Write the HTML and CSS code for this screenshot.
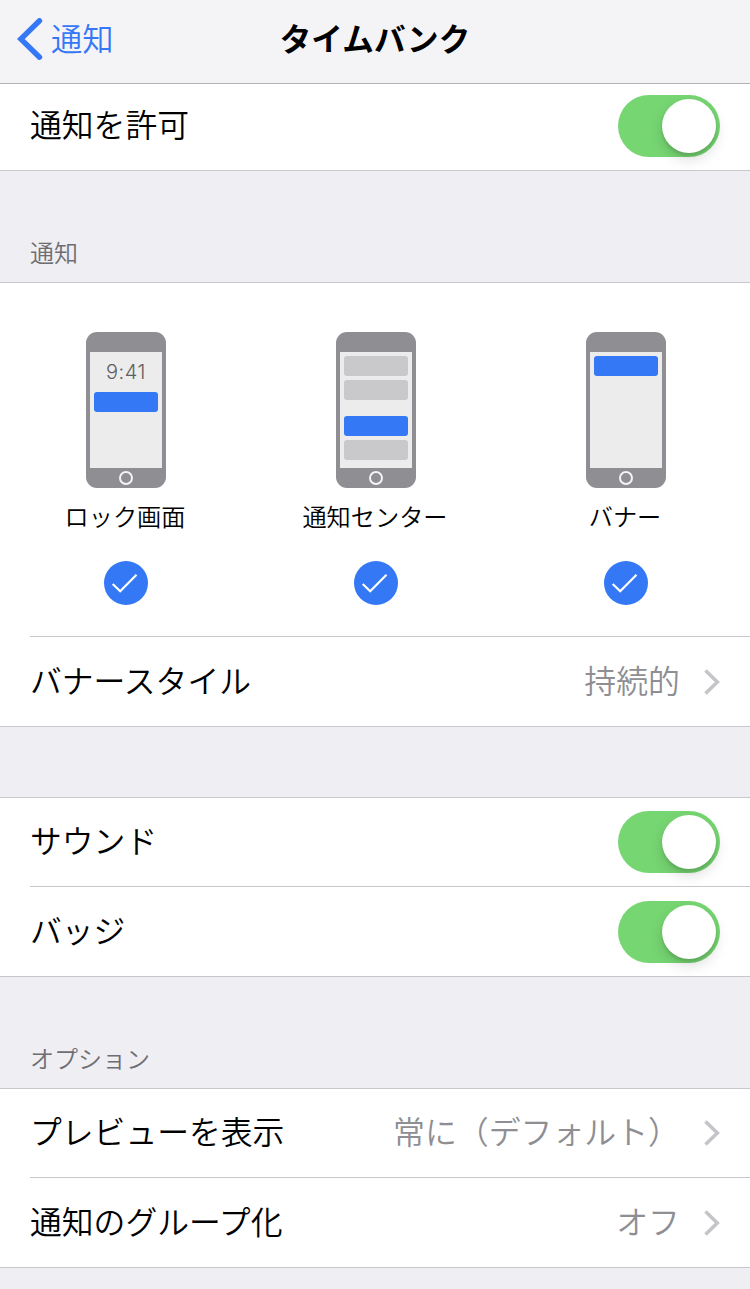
FILE: index.html
```html
<!DOCTYPE html>
<html lang="ja">
<head>
    <meta charset="UTF-8">
    <meta name="viewport" content="width=device-width, initial-scale=1.0">
    <title>タイムバンク</title>
    <link rel="stylesheet" href="styles.css">
</head>
<body>
    <header>
        <a class="back" href="#">
            <svg width="26" height="42" viewBox="0 0 26 42"><path d="M22.5 2.8L3.8 21L22.5 39.2" fill="none" stroke="#3478f6" stroke-width="5.4" stroke-linecap="round"/></svg>
            <span>通知</span>
        </a>
        <h1>タイムバンク</h1>
    </header>
    <main>
        <section class="group first">
            <div class="row">
                <span class="label">通知を許可</span>
                <span class="toggle"></span>
            </div>
        </section>

        <h2>通知</h2>
        <section class="group">
            <div class="previews">
                <div class="preview">
                    <div class="phone">
                        <div class="screen">
                            <div class="time">9:41</div>
                            <div class="bar blue"></div>
                        </div>
                        <div class="home"></div>
                    </div>
                    <span class="name">ロック画面</span>
                    <svg class="check" width="44" height="44" viewBox="0 0 44 44"><circle cx="22" cy="22" r="22" fill="#3478f6"/><path d="M8.7 23L16.2 30.3L32.5 13.8" fill="none" stroke="#fff" stroke-width="2.2"/></svg>
                </div>
                <div class="preview">
                    <div class="phone">
                        <div class="screen">
                            <div class="bar"></div>
                            <div class="bar"></div>
                            <div class="bar blue spaced"></div>
                            <div class="bar"></div>
                        </div>
                        <div class="home"></div>
                    </div>
                    <span class="name">通知センター</span>
                    <svg class="check" width="44" height="44" viewBox="0 0 44 44"><circle cx="22" cy="22" r="22" fill="#3478f6"/><path d="M8.7 23L16.2 30.3L32.5 13.8" fill="none" stroke="#fff" stroke-width="2.2"/></svg>
                </div>
                <div class="preview">
                    <div class="phone">
                        <div class="screen">
                            <div class="bar blue"></div>
                        </div>
                        <div class="home"></div>
                    </div>
                    <span class="name">バナー</span>
                    <svg class="check" width="44" height="44" viewBox="0 0 44 44"><circle cx="22" cy="22" r="22" fill="#3478f6"/><path d="M8.7 23L16.2 30.3L32.5 13.8" fill="none" stroke="#fff" stroke-width="2.2"/></svg>
                </div>
            </div>
            <div class="row line">
                <span class="label">バナースタイル</span>
                <span class="value">持続的</span>
                <svg class="arrow" width="16" height="26" viewBox="0 0 16 26"><path d="M1.5 1.5L13.3 13L1.5 24.5" fill="none" stroke="#c5c5c9" stroke-width="3.6"/></svg>
            </div>
        </section>

        <div class="gap"></div>
        <section class="group">
            <div class="row">
                <span class="label">サウンド</span>
                <span class="toggle"></span>
            </div>
            <div class="row line">
                <span class="label">バッジ</span>
                <span class="toggle"></span>
            </div>
        </section>

        <h2>オプション</h2>
        <section class="group">
            <div class="row">
                <span class="label">プレビューを表示</span>
                <span class="value">常に（デフォルト）</span>
                <svg class="arrow" width="16" height="26" viewBox="0 0 16 26"><path d="M1.5 1.5L13.3 13L1.5 24.5" fill="none" stroke="#c5c5c9" stroke-width="3.6"/></svg>
            </div>
            <div class="row line">
                <span class="label">通知のグループ化</span>
                <span class="value">オフ</span>
                <svg class="arrow" width="16" height="26" viewBox="0 0 16 26"><path d="M1.5 1.5L13.3 13L1.5 24.5" fill="none" stroke="#c5c5c9" stroke-width="3.6"/></svg>
            </div>
        </section>
    </main>
</body>
</html>
```
FILE: styles.css
```css
body, html {
    margin: 0;
    padding: 0;
}
body {
    min-height: 1289px;
    background-color: #efeef3;
    color: #000000;
    font-family: "Noto Sans CJK JP", sans-serif;
    font-weight: 350;
    overflow: hidden;
}
header {
    box-sizing: border-box;
    height: 84px;
    padding: 0 17px 6px;
    display: grid;
    grid-template-columns: 1fr auto 1fr;
    align-items: center;
    background-color: #f4f4f7;
    border-bottom: 1px solid #b2b2b5;
}
svg {
    display: block;
}
.back {
    display: flex;
    align-items: center;
    gap: 8px;
    font-size: 31.3px;
    line-height: 40px;
    color: #3478f6;
    text-decoration: none;
}
.back span {
    padding-bottom: 2px;
}
h1 {
    margin: 0;
    padding-bottom: 4px;
    font-size: 31.6px;
    line-height: 40px;
    font-weight: 700;
}
h2 {
    box-sizing: border-box;
    height: 111px;
    margin: 0;
    padding: 63px 30px 0;
    font-size: 24px;
    line-height: 36px;
    font-weight: 350;
    color: #6d6d72;
}
.gap {
    height: 70px;
}
.group {
    background-color: #ffffff;
    border-top: 1px solid #c8c7cc;
    border-bottom: 1px solid #c8c7cc;
}
.group.first {
    border-top: none;
}
.row {
    box-sizing: border-box;
    height: 88px;
    padding-right: 30px;
    margin-left: 30px;
    display: flex;
    align-items: center;
}
.row.line {
    height: 90px;
    border-top: 1px solid #c8c7cc;
}
.first .row {
    height: 86px;
    padding-bottom: 2px;
}
.label {
    flex: 1;
    font-size: 31.8px;
    line-height: 44px;
    padding-bottom: 6px;
}
.value {
    font-size: 31.9px;
    line-height: 44px;
    padding-bottom: 6px;
    color: #8e8e93;
}
.arrow {
    margin-left: 24px;
}
.toggle {
    box-sizing: border-box;
    width: 102px;
    height: 62px;
    padding: 4px;
    border-radius: 31px;
    background-color: #76d672;
    display: flex;
    justify-content: flex-end;
}
.toggle::after {
    content: "";
    width: 54px;
    height: 54px;
    border-radius: 50%;
    background-color: #ffffff;
    box-shadow: 0 6px 14px rgba(0, 0, 0, 0.15), 0 3px 3px rgba(0, 0, 0, 0.1);
}
.previews {
    box-sizing: border-box;
    height: 353px;
    padding-top: 49px;
    display: grid;
    grid-template-columns: repeat(3, 1fr);
}
.preview {
    display: flex;
    flex-direction: column;
    align-items: center;
}
.phone {
    box-sizing: border-box;
    width: 80px;
    height: 156px;
    padding: 20px 4px 0;
    margin-left: 2px;
    border-radius: 11px;
    background-color: #8e8e93;
}
.screen {
    box-sizing: border-box;
    height: 116px;
    padding: 4px;
    display: flex;
    flex-direction: column;
    gap: 4px;
    background-color: #ececec;
}
.time {
    height: 32px;
    font-family: Inter, sans-serif;
    font-size: 20px;
    line-height: 33px;
    font-weight: 300;
    letter-spacing: 0.6px;
    text-align: center;
    color: #5e5e63;
}
.bar {
    height: 20px;
    border-radius: 3px;
    background-color: #c9c9cb;
}
.bar.blue {
    background-color: #3478f6;
}
.bar.spaced {
    margin-top: 12px;
}
.home {
    box-sizing: border-box;
    width: 14px;
    height: 14px;
    margin: 3px auto 0;
    border: 2px solid #f4f4f4;
    border-radius: 50%;
}
.name {
    margin-top: 10px;
    font-size: 24.2px;
    line-height: 36px;
}
.check {
    margin: 27px 0 0 2px;
}
```
